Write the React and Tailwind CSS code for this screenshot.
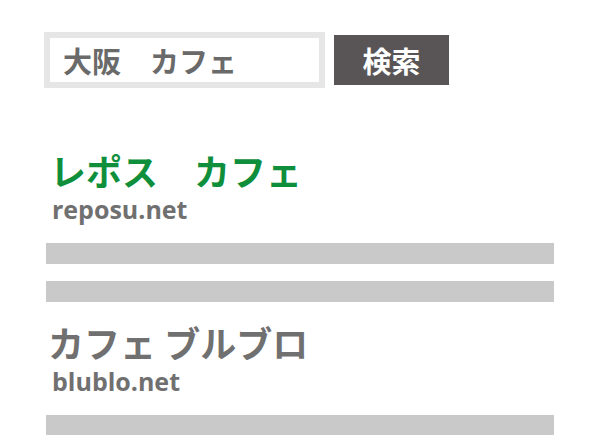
export default function App() {
  const jp = { fontFamily: '"Noto Sans CJK JP", "Noto Sans", sans-serif' };
  const latin = { fontFamily: '"Open Sans", "Noto Sans", sans-serif' };
  return (
    <div className="w-[600px] h-[435px] bg-white overflow-hidden pl-[44px] pt-[32px]" style={jp}>
      <div className="flex items-center">
        <div className="w-[281px] h-[56px] border-[6px] border-[#e6e6e6] flex items-center pl-[13px] text-[29px] font-bold text-[#6a6a6a] leading-none">
          大阪　カフェ
        </div>
        <div className="ml-[9px] w-[115px] h-[50px] bg-[#595556] flex items-center justify-center text-white text-[29px] font-bold leading-none">
          検索
        </div>
      </div>

      <div className="mt-[64px] pl-[6px] text-[36px] font-bold leading-[36px] text-[#0f8f3b]">レポス　カフェ</div>
      <div className="mt-[6px] pl-[8px] text-[25px] font-bold leading-[30px] text-[#707070]" style={latin}>reposu.net</div>
      <div className="mt-[19px] ml-[2px] w-[508px] h-[21px] bg-[#c9c9c9]"></div>
      <div className="mt-[17px] ml-[2px] w-[508px] h-[21px] bg-[#c9c9c9]"></div>

      <div className="mt-[22px] pl-[4px] text-[36px] font-bold leading-[36px] text-[#707070]">カフェ ブルブロ</div>
      <div className="mt-[6px] pl-[8px] text-[25px] font-bold leading-[30px] text-[#707070]" style={latin}>blublo.net</div>
      <div className="mt-[19px] ml-[2px] w-[508px] h-[21px] bg-[#c9c9c9]"></div>
    </div>
  );
}
